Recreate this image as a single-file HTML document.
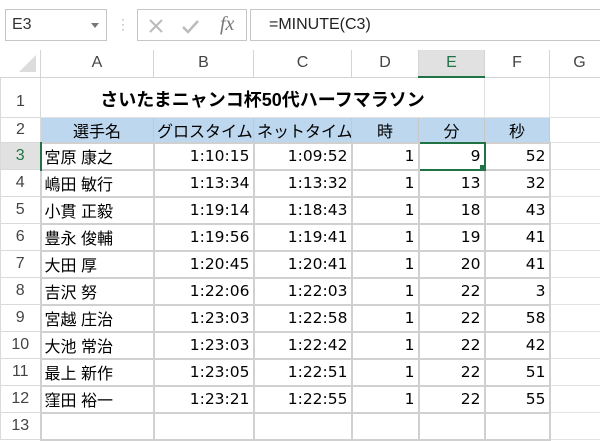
<!DOCTYPE html>
<html><head><meta charset="utf-8"><style>
*{margin:0;padding:0;box-sizing:border-box}
body{width:600px;height:416px;overflow:hidden;background:#fff;font-family:"Liberation Sans","Noto Sans CJK JP",sans-serif;position:relative}
.box{position:absolute;border:1px solid #c6c6c6;background:#fff}
table{position:absolute;left:0;top:50px;border-collapse:collapse;table-layout:fixed;width:609px}
td{border:1px solid #d4d4d4;font-size:16px;color:#000;white-space:nowrap;overflow:hidden;padding:0 3px}
td.h{background:#fff;color:#444;text-align:center;border-color:#dadada;font-size:16px}
tr.ch td{height:27px;background:#fff;color:#444;text-align:center;border-top:none}
td.r{text-align:right;font-family:"DejaVu Sans",sans-serif;font-size:15.5px}
td.b{background:#bdd7ee;text-align:center;border-color:#c8c8c8}
tr.d td{height:27px;border-width:2px;border-color:#d0d0d0}
tr.d td.h{border-width:1px;border-color:#dadada}
td.o{border-color:#e2e2e2!important;border-width:1px!important}
</style></head><body>
<div class="box" style="left:5px;top:9px;width:102px;height:32px;font-size:16px;color:#333;padding:6px 0 0 6px">E3<span style="position:absolute;left:85px;top:13px;border-left:4px solid transparent;border-right:4px solid transparent;border-top:5px solid #777"></span></div>
<div style="position:absolute;left:121px;top:17px;color:#999;font-size:12px;line-height:5px">·<br>·<br>·</div>
<div class="box" style="left:137px;top:9px;width:110px;height:32px">
<svg width="110" height="32" style="position:absolute;left:0;top:0"><path d="M12 10 L24 22 M24 10 L12 22" stroke="#bbb" stroke-width="2"/><path d="M45 17 L50 22 L60 11" stroke="#bbb" stroke-width="2.5" fill="none"/></svg>
<span style="position:absolute;left:82px;top:3px;font-family:'Liberation Serif',serif;font-style:italic;font-size:20px;color:#777">fx</span></div>
<div class="box" style="left:250px;top:9px;width:360px;height:32px;font-size:16px;color:#222;padding:6px 0 0 18px">=MINUTE(C3)</div>
<table>
<colgroup><col style="width:40px"><col style="width:113px"><col style="width:100px"><col style="width:98px"><col style="width:67px"><col style="width:66px"><col style="width:65px"><col style="width:60px"></colgroup>
<tr class="ch"><td style="border-left:none;position:relative"><svg width="40" height="26" style="position:absolute;left:0;top:0"><polygon points="35,5 35,22 18,22" fill="#dcdcdc"/></svg></td><td>A</td><td>B</td><td>C</td><td>D</td><td style="background:#e1e1e1;color:#217346;border-bottom:2px solid #217346">E</td><td>F</td><td>G</td></tr>
<tr><td class="h" style="height:40px;padding-top:10px">1</td><td colspan="5" class="o" style="text-align:center;font-weight:bold;font-size:18px;padding-top:4px">さいたまニャンコ杯50代ハーフマラソン</td><td class="o"></td><td class="o"></td></tr>
<tr><td class="h" style="height:25px">2</td><td class="b">選手名</td><td class="b">グロスタイム</td><td class="b">ネットタイム</td><td class="b">時</td><td class="b">分</td><td class="b">秒</td><td class="o"></td></tr>
<tr class="d"><td class="h" style="background:#e1e1e1;color:#217346;border-right:2px solid #217346">3</td><td>宮原 康之</td><td class="r">1:10:15</td><td class="r">1:09:52</td><td class="r">1</td><td class="r" style="border:2px solid #217346;position:relative">9<span style="position:absolute;right:-2px;bottom:-2px;width:6px;height:6px;background:#217346"></span></td><td class="r">52</td><td class="o"></td></tr>
<tr class="d"><td class="h">4</td><td>嶋田 敏行</td><td class="r">1:13:34</td><td class="r">1:13:32</td><td class="r">1</td><td class="r">13</td><td class="r">32</td><td class="o"></td></tr>
<tr class="d"><td class="h">5</td><td>小貫 正毅</td><td class="r">1:19:14</td><td class="r">1:18:43</td><td class="r">1</td><td class="r">18</td><td class="r">43</td><td class="o"></td></tr>
<tr class="d"><td class="h">6</td><td>豊永 俊輔</td><td class="r">1:19:56</td><td class="r">1:19:41</td><td class="r">1</td><td class="r">19</td><td class="r">41</td><td class="o"></td></tr>
<tr class="d"><td class="h">7</td><td>大田 厚</td><td class="r">1:20:45</td><td class="r">1:20:41</td><td class="r">1</td><td class="r">20</td><td class="r">41</td><td class="o"></td></tr>
<tr class="d"><td class="h">8</td><td>吉沢 努</td><td class="r">1:22:06</td><td class="r">1:22:03</td><td class="r">1</td><td class="r">22</td><td class="r">3</td><td class="o"></td></tr>
<tr class="d"><td class="h">9</td><td>宮越 庄治</td><td class="r">1:23:03</td><td class="r">1:22:58</td><td class="r">1</td><td class="r">22</td><td class="r">58</td><td class="o"></td></tr>
<tr class="d"><td class="h">10</td><td>大池 常治</td><td class="r">1:23:03</td><td class="r">1:22:42</td><td class="r">1</td><td class="r">22</td><td class="r">42</td><td class="o"></td></tr>
<tr class="d"><td class="h">11</td><td>最上 新作</td><td class="r">1:23:05</td><td class="r">1:22:51</td><td class="r">1</td><td class="r">22</td><td class="r">51</td><td class="o"></td></tr>
<tr class="d"><td class="h">12</td><td>窪田 裕一</td><td class="r">1:23:21</td><td class="r">1:22:55</td><td class="r">1</td><td class="r">22</td><td class="r">55</td><td class="o"></td></tr>
<tr class="d"><td class="h">13</td><td></td><td></td><td></td><td></td><td></td><td></td><td class="o"></td></tr>
</table>
</body></html>
